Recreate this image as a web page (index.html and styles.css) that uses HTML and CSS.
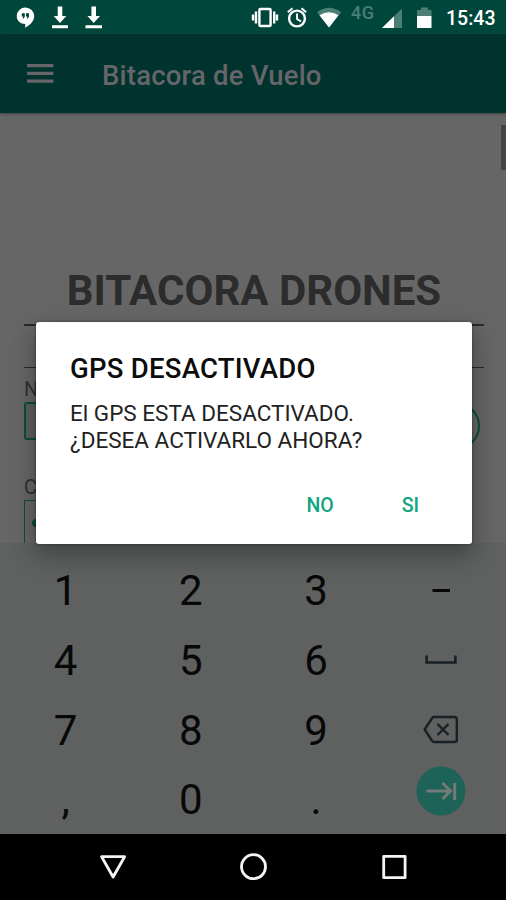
FILE: index.html
```html
<!DOCTYPE html>
<html lang="es">
<head>
<meta charset="utf-8">
<title>Bitacora de Vuelo</title>
<link rel="stylesheet" href="styles.css">
</head>
<body>
<div class="phone">
  <header class="status">
    <svg class="status-icons" width="110" height="35" viewBox="0 0 110 35" fill="#fff">
      <path d="M25.500 7.500a8.700 8.700 0 0 0-8.800 8.600c0 4.800 3.800 8 8.500 8v3.700c5.500-2.800 9-7 9-11.700a8.700 8.700 0 0 0-8.700-8.600z"/>
      <path fill="#00463a" d="M21.800 13.200h3v3.500l-1.300 1.800h-1l.7-2h-1.400zM26 13.200h3v3.500l-1.300 1.800h-1l.7-2H26z"/>
      <path d="M57.700 6.500h4.600v9.500h4L60 23l-6.300-7h4zM52 25.200h16v3H52zM91.400 6.500H96v9.500h4L93.700 23l-6.300-7h4zM85.500 25.200h16.500v3H85.500z"/>
    </svg>
    <svg class="status-icons" width="192" height="35" viewBox="250 0 192 35" fill="none" stroke="#fff" stroke-width="2.400">
      <rect x="259.400" y="9" width="11.200" height="17" rx="1"/>
      <path d="M256 11.500v12M253 14.500v6M274.200 11.500v12M277 14.500v6"/>
      <circle cx="297" cy="18.500" r="7.900"/>
      <path d="M297 13.500v5.500l4 2.500M287.800 12.300l4.700-4M306.200 12.300l-4.700-4" stroke-width="2"/>
      <g stroke="none">
        <path fill="#4b7e75" d="M317 12.300q12-9 24.200 0L329 27.500z"/>
        <path fill="#fff" d="M319.500 15.200q9.500-6 19 0L329 27.500z"/>
        <path fill="#4b7e75" d="M402 8.500V28h-20z"/>
        <path fill="#fff" d="M394 16.200V28h-12z"/>
        <path fill="#4b7e75" d="M417 10h4V7.500h7V10h3.500v7H417z"/>
        <path fill="#fff" d="M417 16h14.500v12H417z"/>
        <text class="network" x="351" y="18.500">4G</text>
      </g>
    </svg>
    <span class="clock">15:43</span>
  </header>

  <div class="appbar">
    <svg class="menu" width="27" height="20" viewBox="0 0 27 20" fill="#66666a"><path d="M0 0h26.500v3.200H0zM0 7.800h26.500V11H0zM0 15.600h26.500v3.200H0z"/></svg>
    <h1 class="app-title">Bitacora de Vuelo</h1>
  </div>

  <main class="page">
    <div class="scrollbar"></div>
    <h2 class="heading">BITACORA DRONES</h2>
    <div class="rule"></div>
    <div class="rule rule-second"></div>
    <div class="label">N</div>
    <div class="row"><div class="input"></div><div class="round"></div></div>
    <div class="label label-second">C</div>
    <div class="select"><div class="dot"></div></div>
  </main>

  <div class="keyboard">
    <span>1</span><span>2</span><span>3</span>
    <span><svg width="36" height="36" viewBox="0 0 36 36"><path d="M9.500 17.500H27" stroke="#080808" stroke-width="3"/></svg></span>
    <span>4</span><span>5</span><span>6</span>
    <span><svg width="36" height="36" viewBox="0 0 36 36"><path d="M3.600 12.500v7h28.800v-7" fill="none" stroke="#172126" stroke-width="2.600"/></svg></span>
    <span>7</span><span>8</span><span>9</span>
    <span><svg width="36" height="36" viewBox="0 0 36 36" fill="none" stroke="#172126" stroke-width="2.400"><path d="M11 5h20.500a2.300 2.300 0 0 1 2.300 2.300v20.400a2.300 2.300 0 0 1-2.300 2.300H11q-1 0-1.800-1L1.600 17.500l7.600-11.500q.8-1 1.800-1z"/><path d="M14.500 12l11 11M25.500 12l-11 11"/></svg></span>
    <span>,</span><span>0</span><span>.</span>
    <span class="next"><svg width="50" height="50" viewBox="0 0 50 50"><circle cx="25" cy="25" r="24.500" fill="#1e6357"/><path d="M10.500 25h24M26.500 17l8 8-8 8M38.700 17v17" fill="none" stroke="#737b79" stroke-width="3"/></svg></span>
  </div>

  <nav class="nav">
    <svg width="506" height="66" viewBox="0 0 506 66" fill="none" stroke="#f4f4f4" stroke-width="2.800" stroke-linejoin="round"><path d="M101.600 22.700h23L113.100 43z"/><circle cx="253.500" cy="32.700" r="12"/><rect x="383.700" y="22.300" width="21.400" height="21.400"/></svg>
  </nav>

  <section class="dialog" role="dialog">
    <h3 class="dialog-title">GPS DESACTIVADO</h3>
    <p class="dialog-text">El GPS ESTA DESACTIVADO.<br>¿DESEA ACTIVARLO AHORA?</p>
    <div class="actions"><span>NO</span><span>SI</span></div>
  </section>
</div>
</body>
</html>
```
FILE: styles.css
```css
* { box-sizing: border-box; }
body { margin: 0; font-family: Roboto, "Liberation Sans", sans-serif; }
h1, h2, h3, p { margin: 0; }
svg { display: block; }
.phone { position: relative; width: 506px; height: 900px; overflow: hidden; display: flex; flex-direction: column; background: #666; }
.status { height: 34px; background: #00463a; display: flex; justify-content: space-between; flex: none; }
.status-icons:nth-child(2) { margin-left: auto; }
.network { font-size: 18px; font-weight: 500; fill: #4b7e75; letter-spacing: .5px; }
.clock { width: 64px; padding-left: 4px; color: #fff; font-size: 19.500px; font-weight: 500; line-height: 37px; white-space: nowrap; }
.appbar { height: 79px; flex: none; background: #00332d; display: flex; align-items: center; padding: 0 27px; box-shadow: 0 1px 3px #413e43; z-index: 1; }
.app-title { margin-left: 48px; padding-top: 3px; font-size: 27.500px; letter-spacing: .2px; font-weight: 500; color: #66666a; white-space: nowrap; }
.page { position: relative; height: 430px; flex: none; padding: 154px 22px 0 24px; overflow: hidden; background: #666; }
.scrollbar { position: absolute; right: 0; top: 12px; width: 5px; height: 45px; background: #444; }
.heading { height: 48px; line-height: 48px; text-align: center; font-size: 42px; font-weight: 700; color: #2c2c2c; white-space: nowrap; }
.rule { height: 1.500px; margin-top: 9px; background: #292929; }
.rule-second { margin-top: 41px; }
.label { height: 24px; margin-top: 9px; line-height: 24px; font-size: 20px; color: #303030; }
.row { display: flex; justify-content: space-between; margin-top: 1px; padding-right: 4px; }
.input { width: 180px; height: 38px; border: 2px solid #0d4c3c; border-radius: 3px; background: #5d6060; }
.round { width: 48px; height: 48px; border: 2px solid #0d4c3c; border-radius: 50%; }
.label-second { margin-top: 25px; }
.select { width: 400px; height: 60px; border: 1.500px solid #0d4c3c; margin-top: 1px; padding: 18px 7px; }
.dot { width: 8px; height: 8px; border-radius: 50%; background: #0d4c3c; }
.keyboard { height: 291px; flex: none; padding: 13px 2px 0 3px; display: grid; grid-template-columns: repeat(4, 125.200px); grid-template-rows: repeat(4, 69.700px); background: #5e6160; color: #080808; font-size: 42px; }
.keyboard span { display: flex; justify-content: center; align-items: center; }
.keyboard .next { padding-bottom: 17px; }
.nav { height: 66px; flex: none; background: #000; }
.dialog { position: absolute; z-index: 2; left: 36px; top: 322px; width: 436px; height: 222px; padding: 31px 34px 0; background: #fff; border-radius: 3px; box-shadow: 0 10px 24px 2px rgba(0,0,0,.3), 0 0 3px rgba(0,0,0,.4); }
.dialog-title { font-size: 27.500px; letter-spacing: .25px; line-height: 32px; font-weight: 500; color: #0c0c0c; white-space: nowrap; }
.dialog-text { margin-top: 15px; font-size: 22.500px; line-height: 27px; color: #222; white-space: nowrap; }
.actions { display: flex; justify-content: flex-end; gap: 68px; margin-top: 39px; padding-right: 19px; font-size: 19.500px; line-height: 25px; font-weight: 500; color: #10a47f; }
```
